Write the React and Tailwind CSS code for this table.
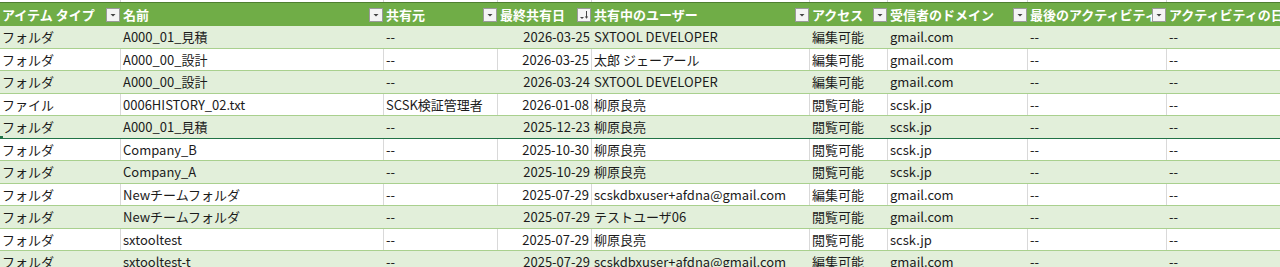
import React from 'react';

const cols = [
  { key: 'type', title: 'アイテム タイプ', w: 'w-[121px]' },
  { key: 'name', title: '名前', w: 'w-[263px]' },
  { key: 'owner', title: '共有元', w: 'w-[114px]' },
  { key: 'date', title: '最終共有日', w: 'w-[94px]', right: true, sort: true },
  { key: 'user', title: '共有中のユーザー', w: 'w-[218px]' },
  { key: 'access', title: 'アクセス', w: 'w-[78px]' },
  { key: 'domain', title: '受信者のドメイン', w: 'w-[140px]' },
  { key: 'last', title: '最後のアクティビティ', w: 'w-[139px]' },
  { key: 'actDate', title: 'アクティビティの日付', w: 'w-[160px]' },
];

const rows = [
  ['フォルダ', 'A000_01_見積', '--', '2026-03-25', 'SXTOOL DEVELOPER', '編集可能', 'gmail.com'],
  ['フォルダ', 'A000_00_設計', '--', '2026-03-25', '太郎 ジェーアール', '編集可能', 'gmail.com'],
  ['フォルダ', 'A000_00_設計', '--', '2026-03-24', 'SXTOOL DEVELOPER', '編集可能', 'gmail.com'],
  ['ファイル', '0006HISTORY_02.txt', 'SCSK検証管理者', '2026-01-08', '柳原良亮', '閲覧可能', 'scsk.jp'],
  ['フォルダ', 'A000_01_見積', '--', '2025-12-23', '柳原良亮', '閲覧可能', 'scsk.jp'],
  ['フォルダ', 'Company_B', '--', '2025-10-30', '柳原良亮', '閲覧可能', 'scsk.jp'],
  ['フォルダ', 'Company_A', '--', '2025-10-29', '柳原良亮', '閲覧可能', 'scsk.jp'],
  ['フォルダ', 'Newチームフォルダ', '--', '2025-07-29', 'scskdbxuser+afdna@gmail.com', '編集可能', 'gmail.com'],
  ['フォルダ', 'Newチームフォルダ', '--', '2025-07-29', 'テストユーザ06', '閲覧可能', 'gmail.com'],
  ['フォルダ', 'sxtooltest', '--', '2025-07-29', '柳原良亮', '閲覧可能', 'scsk.jp'],
  ['フォルダ', 'sxtooltest-t', '--', '2025-07-29', 'scskdbxuser+afdna@gmail.com', '編集可能', 'gmail.com'],
];

function FilterButton({ sort }) {
  return (
    <div className="shrink-0 w-[14px] h-[14px] mr-[1px] bg-[#f4f4f4] border border-[#9a9a9a] flex items-center justify-center">
      {sort ? (
        <svg width="12" height="12" viewBox="0 0 12 12">
          <path d="M2 8h4l-2 2z" fill="#444" />
          <path d="M8.5 2v7" stroke="#444" strokeWidth="1" />
          <path d="M6.8 7.5h3.4l-1.7 2.2z" fill="#444" />
        </svg>
      ) : (
        <svg width="12" height="12" viewBox="0 0 12 12">
          <path d="M3.5 5h5l-2.5 2.5z" fill="#444" />
        </svg>
      )}
    </div>
  );
}

export default function App() {
  return (
    <div
      className="w-[1280px] h-[267px] overflow-hidden bg-white text-[13px] leading-[18px] text-[#1b1b1b]"
      style={{ fontFamily: '"Noto Sans CJK JP", "Noto Sans", sans-serif' }}
    >
      {/* gridline strip above the table */}
      <div className="flex h-[2px] bg-white">
        {cols.map((c) => (
          <div key={c.key} className={`${c.w} shrink-0 border-r border-[#d4d4d4]`} />
        ))}
      </div>
      <div className="h-[1px] bg-[#4f7f30]" />

      {/* header */}
      <div className="flex h-[23px] bg-[#70ad47] text-white font-bold">
        {cols.map((c) => (
          <div key={c.key} className={`${c.w} shrink-0 flex items-center pl-[2px]`}>
            <span className="flex-1 min-w-0 overflow-hidden whitespace-nowrap">{c.title}</span>
            {c.key !== 'actDate' && <FilterButton sort={c.sort} />}
          </div>
        ))}
      </div>

      {/* body */}
      {rows.map((r, i) => {
        const banded = i % 2 === 0;
        const cells = [...r, '--', '--'];
        return (
          <div
            key={i}
            className={`relative flex border-b border-[#a9d08e] ${banded ? 'h-[23px] bg-[#e2efda]' : 'h-[22px] bg-white'}`}
          >
            {cols.map((c, j) => (
              <div
                key={c.key}
                className={`${c.w} shrink-0 flex items-center whitespace-nowrap ${c.right ? 'justify-end pr-[2px]' : 'pl-[2px]'} ${banded ? '' : 'border-r border-[#d9d9d9]'}`}
              >
                {cells[j]}
              </div>
            ))}
            {i === 4 && (
              <div className="absolute left-0 right-0 bottom-[-2px] h-[2px] bg-[#217346]">
                <div className="absolute left-0 top-[-2px] w-[3px] h-[6px] bg-[#217346]" />
              </div>
            )}
          </div>
        );
      })}
    </div>
  );
}
